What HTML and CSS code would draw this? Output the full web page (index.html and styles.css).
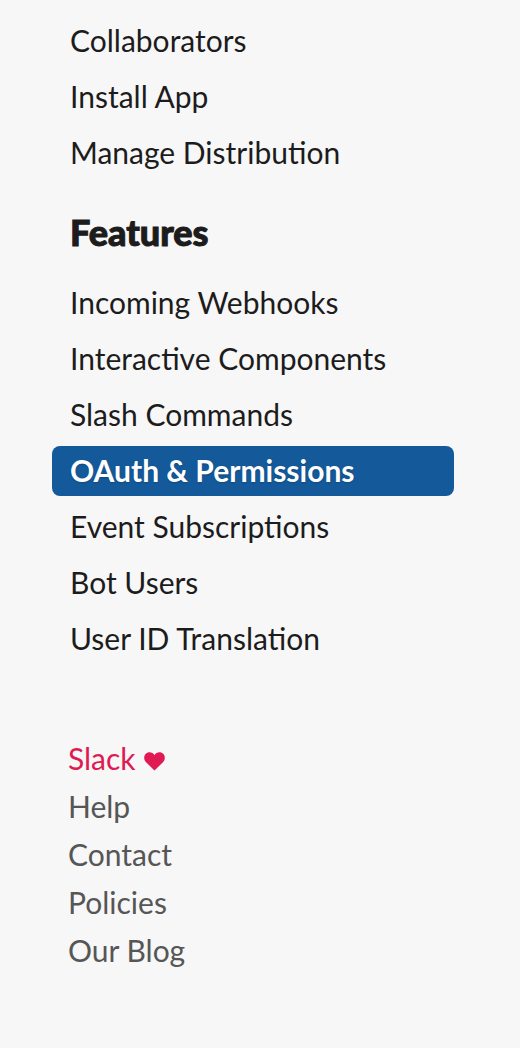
FILE: index.html
```html
<!DOCTYPE html>
<html lang="en">
<head>
<meta charset="utf-8">
<meta name="viewport" content="width=device-width, initial-scale=1">
<title>OAuth &amp; Permissions</title>
<link rel="stylesheet" href="styles.css">
</head>
<body>
<div class="sidebar">
  <nav class="nav" aria-label="App settings">
    <ul class="nav-list">
      <li><a class="nav-link" href="#collaborators">Collaborators</a></li>
      <li><a class="nav-link" href="#install">Install App</a></li>
      <li><a class="nav-link" href="#distribution">Manage Distribution</a></li>
    </ul>
    <h2 class="nav-heading">Features</h2>
    <ul class="nav-list">
      <li><a class="nav-link" href="#webhooks">Incoming Webhooks</a></li>
      <li><a class="nav-link" href="#interactive">Interactive Components</a></li>
      <li><a class="nav-link" href="#commands">Slash Commands</a></li>
      <li><a class="nav-link nav-link-active" href="#oauth" aria-current="page">OAuth &amp; Permissions</a></li>
      <li><a class="nav-link" href="#events">Event Subscriptions</a></li>
      <li><a class="nav-link" href="#bots">Bot Users</a></li>
      <li><a class="nav-link" href="#translation">User ID Translation</a></li>
    </ul>
  </nav>
  <footer class="footer">
    <ul class="footer-list">
      <li><a class="footer-link footer-link-brand" href="#slack">Slack
        <svg class="heart" viewBox="0 0 22 19" aria-hidden="true"><path d="M10.500 18.500 1.800 10C-.3 7.800-.3 4 1.600 2 4-.4 8.500-.3 10.500 3.300 12.500-.3 17-.4 19.400 2c1.900 2 1.900 5.800-.2 8Z"/></svg></a></li>
      <li><a class="footer-link" href="#help">Help</a></li>
      <li><a class="footer-link" href="#contact">Contact</a></li>
      <li><a class="footer-link" href="#policies">Policies</a></li>
      <li><a class="footer-link" href="#blog">Our Blog</a></li>
    </ul>
  </footer>
</div>
</body>
</html>
```
FILE: styles.css
```css
body {
  margin: 0;
  background: #f7f7f7;
  color: #1d1c1d;
  font-family: Lato, "Liberation Sans", sans-serif;
  font-size: 30px;
}

.sidebar {
  padding: 16px 66px 72px 52px;
}

.nav-list,
.footer-list {
  display: flex;
  flex-direction: column;
  margin: 0;
  padding: 0;
  list-style: none;
}

.nav-list {
  gap: 6px;
}

.nav-link {
  display: block;
  padding: 0 18px 2px;
  border-radius: 8px;
  color: inherit;
  line-height: 48px;
  text-decoration: none;
}

.nav-link-active {
  background: #145a9b;
  color: #fff;
  font-weight: 700;
  text-shadow: 0 1px 2px rgba(0, 0, 0, 0.2);
}

.nav-heading {
  margin: 30px 18px 20px;
  padding-bottom: 2px;
  font-size: 36px;
  font-weight: 900;
  line-height: 48px;
  -webkit-text-stroke: 1px currentColor;
}

.footer {
  padding: 70px 16px 0;
}

.footer-link {
  display: flex;
  align-items: center;
  gap: 8px;
  width: fit-content;
  color: #565656;
  line-height: 48px;
  text-decoration: none;
}

.footer-link-brand {
  color: #e01a52;
}

.heart {
  width: 22px;
  height: 19px;
  padding-top: 6px;
  fill: currentColor;
}
```
